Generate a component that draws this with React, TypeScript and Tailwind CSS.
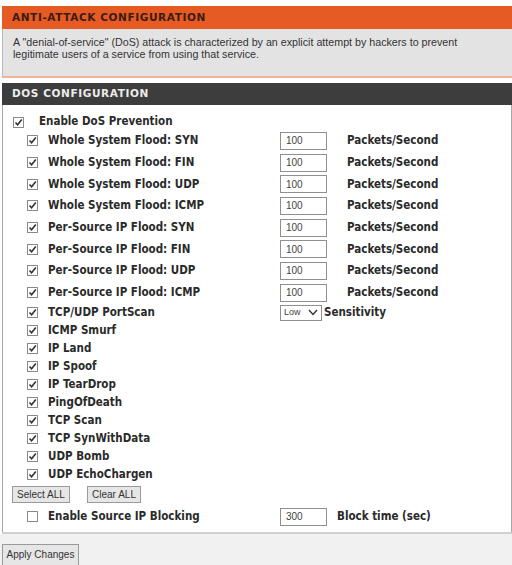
import React from "react";

const Check = ({ checked = true }: { checked?: boolean }) => (
  <span className="inline-flex w-[11px] h-[11px] shrink-0 border border-[#8a8a8a] bg-white items-center justify-center">
    {checked && (
      <svg width="9" height="9" viewBox="0 0 9 9">
        <path d="M1.5 4.5 L3.6 6.8 L7.8 1.6" fill="none" stroke="#333" strokeWidth="1.6" />
      </svg>
    )}
  </span>
);

const rates = [
  "Whole System Flood: SYN",
  "Whole System Flood: FIN",
  "Whole System Flood: UDP",
  "Whole System Flood: ICMP",
  "Per-Source IP Flood: SYN",
  "Per-Source IP Flood: FIN",
  "Per-Source IP Flood: UDP",
  "Per-Source IP Flood: ICMP",
];

const others = [
  "ICMP Smurf",
  "IP Land",
  "IP Spoof",
  "IP TearDrop",
  "PingOfDeath",
  "TCP Scan",
  "TCP SynWithData",
  "UDP Bomb",
  "UDP EchoChargen",
];

const bold = "font-bold text-[11.5px] text-[#2a2a2a]";

export default function App() {
  return (
    <div
      className="w-[512px] h-[565px] bg-white flex flex-col overflow-hidden"
      style={{ fontFamily: '"DejaVu Sans Condensed", "DejaVu Sans", sans-serif' }}
    >
      <div className="h-[6px] shrink-0" />
      <div className="ml-[2px] shrink-0">
        <div
          className="h-[23px] bg-[#e65a24] flex items-center pl-[10px] font-bold text-[10.5px] text-[#3a1c10] tracking-[0.6px]"
          style={{ fontFamily: '"DejaVu Sans", sans-serif' }}
        >
          ANTI-ATTACK CONFIGURATION
        </div>
        <div
          className="h-[49px] bg-[#e3e3e3] border-l border-[#b8b8b8] border-b-2 border-b-[#f0b498] pl-[10px] pt-[7px] text-[10.7px] leading-[12px] text-[#333]"
          style={{ fontFamily: '"Liberation Sans", sans-serif' }}
        >
          A "denial-of-service" (DoS) attack is characterized by an explicit attempt by hackers to prevent
          <br />
          legitimate users of a service from using that service.
        </div>
      </div>
      <div className="h-[5px] shrink-0" />
      <div className="ml-[2px] shrink-0 flex flex-col border-b-2 border-[#cfcfcf]">
        <div
          className="h-[22px] bg-[#3d3d3d] flex items-center pl-[10px] font-bold text-[10.5px] text-[#ececec] tracking-[0.6px]"
          style={{ fontFamily: '"DejaVu Sans", sans-serif' }}
        >
          DOS CONFIGURATION
        </div>
        <div className="border-l border-r border-[#a8a8a8] pt-[9px] pb-[6px]">
          <div className="h-[16px] flex items-center pl-[10px]">
            <Check />
            <span className={`${bold} ml-[15px]`}>Enable DoS Prevention</span>
          </div>
          {rates.map((r) => (
            <div key={r} className="h-[21.7px] flex items-center">
              <div className="w-[277px] shrink-0 flex items-center pl-[24px]">
                <Check />
                <span className={`${bold} ml-[10px]`}>{r}</span>
              </div>
              <div
                className="w-[47px] h-[18px] border border-[#8f8f8f] flex items-center pl-[5px] text-[10px] text-[#444]"
                style={{ fontFamily: '"Liberation Sans", sans-serif' }}
              >
                100
              </div>
              <span className={`${bold} ml-[20px]`}>Packets/Second</span>
            </div>
          ))}
          <div className="h-[18px] flex items-center">
            <div className="w-[277px] shrink-0 flex items-center pl-[24px]">
              <Check />
              <span className={`${bold} ml-[10px]`}>TCP/UDP PortScan</span>
            </div>
            <div
              className="w-[42px] h-[16px] border border-[#8f8f8f] flex items-center pl-[3px] text-[9px] text-[#444]"
              style={{ fontFamily: '"Liberation Sans", sans-serif' }}
            >
              <span>Low</span>
              <svg className="ml-[7px]" width="10" height="7" viewBox="0 0 10 7">
                <path d="M1 1 L5 5.5 L9 1" fill="none" stroke="#333" strokeWidth="1.4" />
              </svg>
            </div>
            <span className={`${bold} ml-[2px]`}>Sensitivity</span>
          </div>
          {others.map((o) => (
            <div key={o} className="h-[18px] flex items-center pl-[24px]">
              <Check />
              <span className={`${bold} ml-[10px]`}>{o}</span>
            </div>
          ))}
          <div
            className="mt-[2px] h-[17px] flex items-stretch pl-[9px] text-[10px] text-[#333]"
            style={{ fontFamily: '"Liberation Sans", sans-serif' }}
          >
            <div className="w-[58px] border border-[#9a9a9a] bg-[#e6e6e6] flex items-center justify-center">
              Select ALL
            </div>
            <div className="ml-[17px] w-[54px] border border-[#9a9a9a] bg-[#e6e6e6] flex items-center justify-center">
              Clear ALL
            </div>
          </div>
          <div className="mt-[5px] h-[18px] flex items-center">
            <div className="w-[277px] shrink-0 flex items-center pl-[24px]">
              <Check checked={false} />
              <span className={`${bold} ml-[10px]`}>Enable Source IP Blocking</span>
            </div>
            <div
              className="w-[47px] h-[18px] border border-[#8f8f8f] flex items-center pl-[5px] text-[10px] text-[#444]"
              style={{ fontFamily: '"Liberation Sans", sans-serif' }}
            >
              300
            </div>
            <span className={`${bold} ml-[10px]`}>Block time (sec)</span>
          </div>
        </div>
      </div>
      <div className="flex-1 bg-[#f1f1f1] pt-[10px] pl-[2px]">
        <div
          className="w-[77px] h-[22px] border border-[#9a9a9a] bg-[#e6e6e6] flex items-center justify-center text-[10px] text-[#333]"
          style={{ fontFamily: '"Liberation Sans", sans-serif' }}
        >
          Apply Changes
        </div>
      </div>
    </div>
  );
}
